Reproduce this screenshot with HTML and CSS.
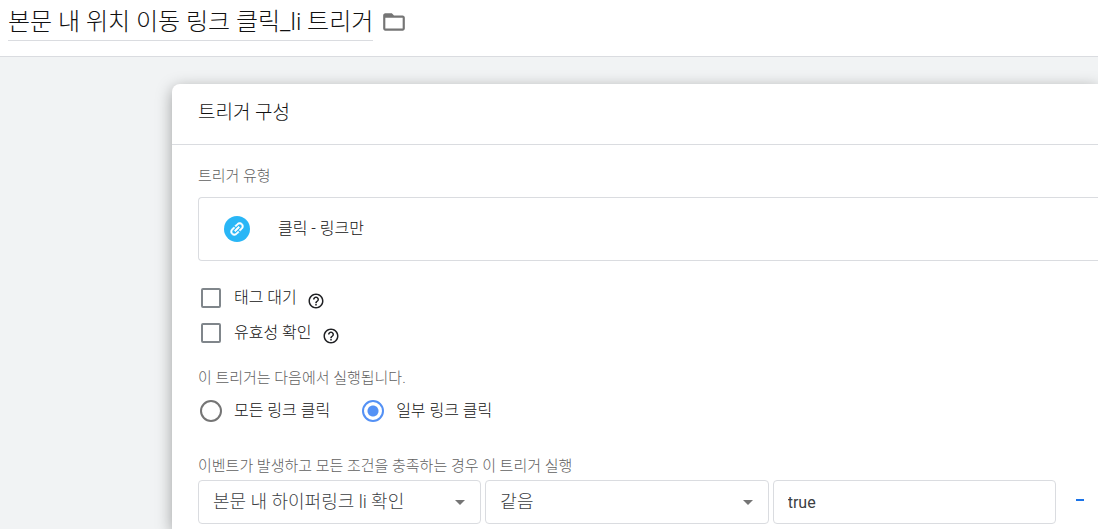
FILE: index.html
```html
<!DOCTYPE html>
<html lang="ko">
<head>
	<meta charset="UTF-8">
	<meta name="viewport" content="width=device-width, initial-scale=1">
	<title>트리거 구성</title>
	<link rel="stylesheet" href="styles.css">
</head>
<body>
	<header class="header">
		<h1 class="header-title">본문 내 위치 이동 링크 클릭_li 트리거</h1>
		<button class="icon-btn" type="button" aria-label="폴더">
			<svg width="26" height="26" viewBox="0 0 24 24"><path fill="#757575" d="M20 6h-8l-2-2H4c-1.1 0-2 .9-2 2v12c0 1.1.9 2 2 2h16c1.1 0 2-.9 2-2V8c0-1.1-.9-2-2-2zm0 12H4V8h16v10z"/></svg>
		</button>
	</header>
	<main class="content">
		<form class="card">
			<h2 class="card-title">트리거 구성</h2>
			<div class="card-body">
				<p class="label">트리거 유형</p>
				<button class="type" type="button">
					<span class="type-icon">
						<svg width="18" height="18" viewBox="0 0 24 24"><path transform="rotate(-45 12 12)" fill="#fff" stroke="#fff" stroke-width=".8" d="M3.9 12c0-1.71 1.39-3.1 3.1-3.1h4V7H7c-2.76 0-5 2.24-5 5s2.24 5 5 5h4v-1.9H7c-1.71 0-3.1-1.39-3.1-3.1zM8 13h8v-2H8v2zm9-6h-4v1.9h4c1.71 0 3.1 1.39 3.1 3.1s-1.39 3.1-3.1 3.1h-4V17h4c2.76 0 5-2.24 5-5s-2.24-5-5-5z"/></svg>
					</span>
					<span>클릭 - 링크만</span>
				</button>
				<div class="checks">
					<div class="option">
						<input type="checkbox" id="wait">
						<label for="wait">태그 대기</label>
						<svg class="help" width="18" height="18" viewBox="0 0 24 24"><path d="M11 18h2v-2h-2v2zm1-16C6.48 2 2 6.48 2 12s4.48 10 10 10 10-4.48 10-10S17.52 2 12 2zm0 18c-4.41 0-8-3.59-8-8s3.59-8 8-8 8 3.59 8 8-3.59 8-8 8zm0-14c-2.21 0-4 1.79-4 4h2c0-1.1.9-2 2-2s2 .9 2 2c0 2-3 1.75-3 5h2c0-2.25 3-2.5 3-5 0-2.21-1.79-4-4-4z"/></svg>
					</div>
					<div class="option">
						<input type="checkbox" id="valid">
						<label for="valid">유효성 확인</label>
						<svg class="help" width="18" height="18" viewBox="0 0 24 24"><path d="M11 18h2v-2h-2v2zm1-16C6.48 2 2 6.48 2 12s4.48 10 10 10 10-4.48 10-10S17.52 2 12 2zm0 18c-4.41 0-8-3.59-8-8s3.59-8 8-8 8 3.59 8 8-3.59 8-8 8zm0-14c-2.21 0-4 1.79-4 4h2c0-1.1.9-2 2-2s2 .9 2 2c0 2-3 1.75-3 5h2c0-2.25 3-2.5 3-5 0-2.21-1.79-4-4-4z"/></svg>
					</div>
				</div>
				<p class="label">이 트리거는 다음에서 실행됩니다.</p>
				<div class="radios">
					<div class="option">
						<input type="radio" name="fire" id="all">
						<label for="all">모든 링크 클릭</label>
					</div>
					<div class="option">
						<input type="radio" name="fire" id="some" checked>
						<label for="some">일부 링크 클릭</label>
					</div>
				</div>
				<p class="label">이벤트가 발생하고 모든 조건을 충족하는 경우 이 트리거 실행</p>
				<div class="condition">
					<select class="field" aria-label="변수">
						<option>본문 내 하이퍼링크 li 확인</option>
					</select>
					<select class="field" aria-label="연산자">
						<option>같음</option>
					</select>
					<input class="field" type="text" value="true" aria-label="값">
					<button class="remove" type="button" aria-label="조건 삭제"></button>
				</div>
			</div>
		</form>
	</main>
</body>
</html>
```
FILE: styles.css
```css
* { margin: 0; padding: 0; box-sizing: border-box; }
body {
	display: flex;
	flex-direction: column;
	min-height: 100vh;
	font: 300 16px/24px Roboto, "Noto Sans CJK KR", sans-serif;
	color: #111;
	background: #f1f3f4;
}
button, input, select {
	font: inherit;
	color: inherit;
}
button {
	border: none;
	background: none;
	cursor: pointer;
}
.header {
	display: flex;
	align-items: flex-start;
	gap: 8px;
	padding: 5px 8px 15px;
	background: #fff;
	border-bottom: 1px solid #dadce0;
}
.header-title {
	font-size: 24px;
	font-weight: 300;
	line-height: 35px;
	border-bottom: 1px solid #dadce0;
}
.icon-btn {
	height: 34px;
}
.icon-btn svg {
	display: block;
}
.content {
	flex: 1;
	display: flex;
	padding: 27px 0 0 172px;
	overflow: hidden;
}
.card {
	flex: 1;
	background: #fff;
	border-radius: 8px 0 0 0;
	box-shadow: 0 4px 16px rgba(0,0,0,.35);
}
.card-title {
	padding: 17px 26px 19px;
	font-size: 19px;
	font-weight: 300;
	line-height: 24px;
	border-bottom: 1px solid #dadce0;
}
.card-body {
	padding: 21px 0 4px 26px;
}
.label {
	font-size: 15px;
	line-height: 20px;
	color: #616161;
}
.type {
	display: flex;
	align-items: center;
	gap: 28px;
	width: 100%;
	height: 64px;
	margin-top: 11px;
	padding: 0 25px;
	border: 1px solid #dadce0;
	border-right: none;
	border-radius: 4px 0 0 4px;
}
.type-icon {
	display: flex;
	align-items: center;
	justify-content: center;
	width: 26px;
	height: 26px;
	border-radius: 50%;
	background: #29b6f6;
}
.checks {
	display: grid;
	gap: 11px;
	padding: 25px 0 23px;
}
.option {
	display: flex;
	align-items: center;
}
.option input {
	appearance: none;
	width: 20px;
	height: 20px;
	margin: 0 13px 0 3px;
	border: 2px solid #80868b;
	border-radius: 2px;
}
.option input[type="radio"] {
	width: 22px;
	height: 22px;
	margin: 0 12px 0 2px;
	border-color: #757575;
	border-radius: 50%;
}
.option input[type="radio"]:checked {
	border-color: #5491f5;
	background: radial-gradient(circle, #5491f5 5px, transparent 6px);
}
.help {
	margin: 5px 0 0 10px;
	fill: #202124;
}
.radios {
	display: flex;
	gap: 30px;
	padding: 11px 0 33px;
}
.condition {
	display: flex;
	gap: 4px;
	margin-top: 4px;
}
.field {
	flex: 1;
	min-width: 0;
	height: 44px;
	padding: 0 14px;
	border: 1px solid #dadce0;
	border-radius: 4px;
	background: #fff;
	color: #3c4043;
}
input.field {
	font-weight: 400;
}
select.field {
	appearance: none;
	font-size: 18px;
	background: #fff url("data:image/svg+xml,%3Csvg xmlns='http://www.w3.org/2000/svg' width='10' height='5'%3E%3Cpath d='M0 0h10L5 5z' fill='%23757575'/%3E%3C/svg%3E") no-repeat right 15px center;
}
.remove {
	display: flex;
	align-items: center;
	justify-content: center;
	width: 40px;
	padding-bottom: 4px;
	margin-right: -2px;
}
.remove::before {
	content: '';
	width: 8px;
	height: 2px;
	background: #1a73e8;
}
```
